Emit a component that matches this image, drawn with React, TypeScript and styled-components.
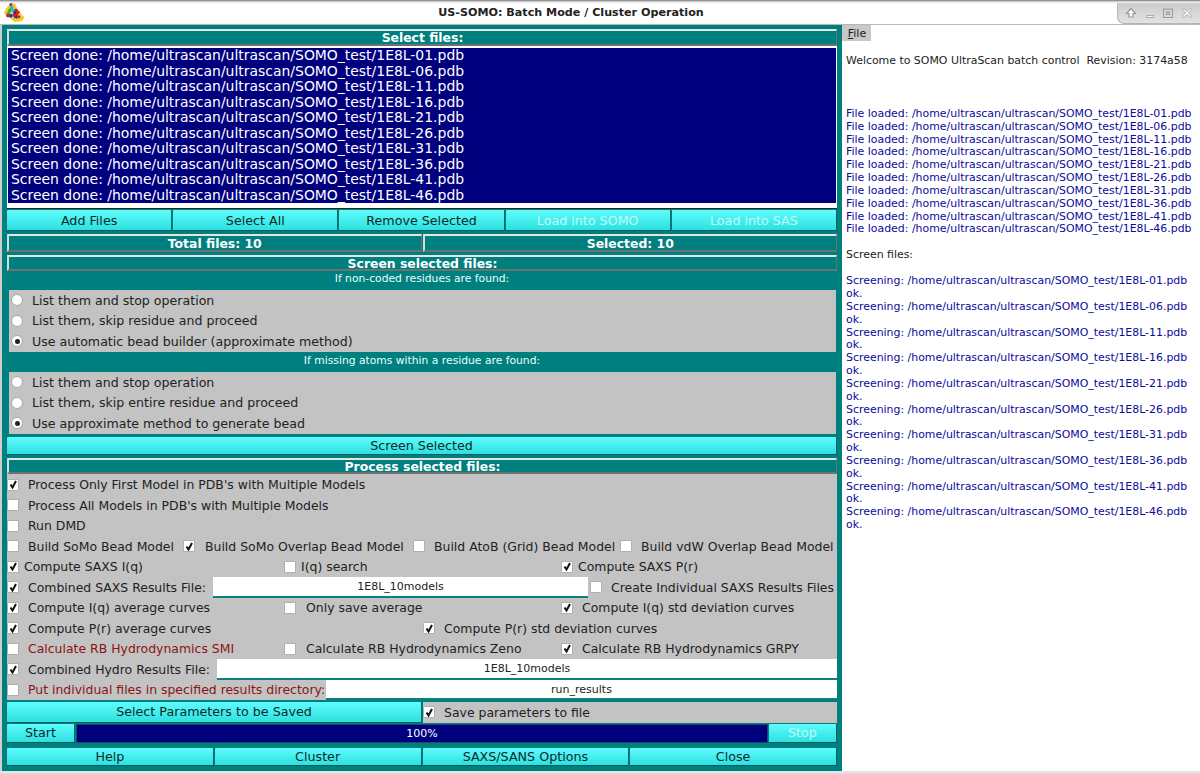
import React from 'react'
import styled, { createGlobalStyle } from 'styled-components'

const GlobalStyle = createGlobalStyle`
  html, body {
    margin: 0;
    padding: 0;
    width: 1200px;
    height: 774px;
    overflow: hidden;
    background: #ffffff;
    font-family: "DejaVu Sans", sans-serif;
  }
`

const Win = styled.div`
  width: 1200px;
  height: 774px;
  display: flex;
  flex-direction: column;
  background: #e8e8e8;
  overflow: hidden;
`
const TitleBar = styled.div`
  height: 25px;
  flex: none;
  display: flex;
  align-items: flex-start;
  justify-content: space-between;
  padding: 3px 0 0 4px;
  background: linear-gradient(#777 0, #e8e8e8 2px, #fff 4px);
  border-bottom: 1px solid #b8b8b8;
  position: relative;
  box-sizing: border-box;
`
const TitleText = styled.div`
  position: absolute;
  left: 0;
  top: 6px;
  width: 1142px;
  text-align: center;
  font-size: 11.15px;
  font-weight: bold;
  color: #222;
`
const WinButtons = styled.div`
  width: 83px;
  height: 21px;
  display: flex;
  align-items: center;
  justify-content: space-around;
  padding: 0 4px;
  box-sizing: border-box;
  background: linear-gradient(#cccccc, #e2e2e2);
  border-left: 1px solid #b5b5b5;
  border-bottom: 1px solid #b5b5b5;
  border-bottom-left-radius: 7px;
`
const Body = styled.div`
  height: 745.5px;
  flex: none;
  display: flex;
  min-height: 0;
`
const Footer = styled.div`
  flex: 1;
  background: linear-gradient(#e4e4e4 0, #e4e4e4 55%, #888 55%, #888 75%, #ddd 75%);
`
const LeftPanel = styled.div`
  width: 842px;
  flex: none;
  background: #007f7f;
  border-left: 2px solid #cfcfcf;
  box-sizing: border-box;
  padding: 4px 5px 0 5px;
  display: flex;
  flex-direction: column;
`
const RightPanel = styled.div`
  flex: 1;
  background: #fff;
  font-size: 10.93px;
  color: #111;
  position: relative;
`
const Label = styled.div<{ $h: number; $grow?: boolean }>`
  height: ${(p) => p.$h}px;
  flex: ${(p) => (p.$grow ? 1 : 'none')};
  display: flex;
  align-items: center;
  justify-content: center;
  box-sizing: border-box;
  background: #007f7f;
  color: #fff;
  font-size: 12.4px;
  font-weight: bold;
  border: 1px solid;
  border-top: 2px solid #e4e4e4;
  border-left: 2px solid #d8d8d8;
  border-right-color: #707070;
  border-bottom: 2px solid #707070;
`
const ListBox = styled.div`
  height: 163px;
  flex: none;
  box-sizing: border-box;
  background: #fff;
  padding: 2px 1px 5px 1px;
  border-bottom: 1px solid #222;
  margin-bottom: 1px;
`
const ListInner = styled.div`
  background: #00007f;
  height: 100%;
  padding-left: 3px;
  overflow: hidden;
`
const ListRow = styled.div`
  height: 15.5px;
  line-height: 15.5px;
  font-size: 13.95px;
  color: #fff;
  white-space: pre;
`
const ButtonRow = styled.div<{ $mb?: number; $mt?: number }>`
  display: flex;
  gap: 1px;
  flex: none;
  margin-top: ${(p) => p.$mt ?? 0}px;
  margin-bottom: ${(p) => p.$mb ?? 0}px;
`
const QtButton = styled.div<{ $h?: number; $off?: boolean; $w?: number }>`
  height: ${(p) => p.$h ?? 18}px;
  flex: ${(p) => (p.$w ? `0 0 ${p.$w}px` : 1)};
  display: flex;
  align-items: center;
  justify-content: center;
  box-sizing: border-box;
  background: linear-gradient(#5ffcfc, #2ee0e0);
  color: ${(p) => (p.$off ? '#bffcfc' : '#0b2b2b')};
  font-size: 12.7px;
  border-bottom: 1px solid #0a5a5a;
  border-right: 1px solid #0a6a6a;
  border-radius: 1px;
`
const Split = styled.div`
  display: flex;
  gap: 1px;
  flex: none;
  margin-bottom: 3px;
`
const SubNote = styled.div<{ $h: number; $pb: number }>`
  height: ${(p) => p.$h}px;
  padding-bottom: ${(p) => p.$pb}px;
  box-sizing: border-box;
  flex: none;
  display: flex;
  align-items: center;
  justify-content: center;
  color: #e8ffff;
  font-size: 10.75px;
`
const RadioGroup = styled.div`
  flex: none;
  background: #c3c3c3;
  margin: 0 1px 0 2px;
  display: flex;
  flex-direction: column;
  padding-left: 2px;
`
const RadioRow = styled.div`
  height: 20.5px;
  display: flex;
  align-items: center;
  gap: 9px;
  font-size: 12.6px;
  color: #222;
`
const RadioMark = styled.span<{ $on?: boolean }>`
  width: 12px;
  height: 12px;
  flex: none;
  border-radius: 50%;
  box-sizing: border-box;
  background: #fff;
  border: 1px solid #a8a8a8;
  display: flex;
  align-items: center;
  justify-content: center;
  &::after {
    content: '';
    display: ${(p) => (p.$on ? 'block' : 'none')};
    width: 5px;
    height: 5px;
    border-radius: 50%;
    background: #222;
  }
`
const Options = styled.div`
  background: #c3c3c3;
  flex: none;
  display: flex;
  flex-direction: column;
  padding-top: 0.5px;
  margin-bottom: 1.5px;
`
const OptionRow = styled.div<{ $cols: string; $gap?: number }>`
  height: 20.5px;
  display: grid;
  grid-template-columns: ${(p) => p.$cols};
  column-gap: ${(p) => p.$gap ?? 0}px;
  align-items: center;
`
const CheckWrap = styled.div<{ $gap?: number; $red?: boolean }>`
  display: flex;
  align-items: center;
  gap: ${(p) => p.$gap ?? 9}px;
  font-size: 12.45px;
  white-space: nowrap;
  color: ${(p) => (p.$red ? '#8c1414' : '#222')};
`
const Box = styled.span`
  width: 12px;
  height: 12px;
  flex: none;
  box-sizing: border-box;
  background: #fff;
  border: 1px solid #b0b0b0;
  border-radius: 1px;
  display: flex;
  align-items: center;
  justify-content: center;
`
const Field = styled.div`
  align-self: stretch;
  background: #fff;
  box-sizing: border-box;
  display: flex;
  align-items: center;
  justify-content: center;
  padding-top: 1px;
  font-size: 11px;
  color: #222;
  border-bottom: 2px solid #0a8080;
`
const SaveRow = styled.div`
  display: flex;
  gap: 1px;
  flex: none;
  margin-bottom: 1px;
`
const SavePane = styled.div`
  flex: 1;
  height: 21px;
  background: #c3c3c3;
  display: flex;
  align-items: center;
`
const Progress = styled.div`
  flex: 1;
  height: 19px;
  background: #00007f;
  color: #fff;
  font-size: 11px;
  display: flex;
  align-items: center;
  justify-content: center;
  border: 1px solid #1a4a6a;
  box-sizing: border-box;
`
const StartRow = styled.div`
  display: flex;
  gap: 1px;
  flex: none;
  margin-bottom: 5px;
`
const MenuTab = styled.div`
  width: 29px;
  height: 16px;
  padding-left: 1px;
  box-sizing: border-box;
  background: #c8c8c8;
  font-size: 11px;
  color: #222;
  display: flex;
  align-items: center;
  justify-content: center;
  span {
    text-decoration: underline;
  }
`
const Log = styled.div`
  padding: 14px 0 0 4px;
  display: flex;
  flex-direction: column;
`
const LogLine = styled.div<{ $blue?: boolean; $mt?: number }>`
  height: 12.85px;
  line-height: 12.85px;
  margin-top: ${(p) => p.$mt ?? 0}px;
  white-space: pre;
  color: ${(p) => (p.$blue ? '#0a0a9c' : '#222')};
`

const ids = ['01', '06', '11', '16', '21', '26', '31', '36', '41', '46']
const base = '/home/ultrascan/ultrascan/SOMO_test/1E8L-'

const Check = ({ on, children, gap, red }: { on?: boolean; children?: React.ReactNode; gap?: number; red?: boolean }) => (
  <CheckWrap $gap={gap} $red={red}>
    <Box>
      {on && (
        <svg width="9" height="9" viewBox="0 0 9 9">
          <path d="M1.5 4.5 L3.5 7.5 L7 1" fill="none" stroke="#111" strokeWidth="2" />
        </svg>
      )}
    </Box>
    {children}
  </CheckWrap>
)

const Radio = ({ on, children }: { on?: boolean; children: React.ReactNode }) => (
  <RadioRow>
    <RadioMark $on={on} />
    {children}
  </RadioRow>
)

const atoms: [number, number, string][] = [
  [7, 2, '#8a3a9a'], [10, 2.5, '#e8d020'], [5, 4.5, '#e8d020'], [8, 5, '#20b0d0'], [11, 5, '#e8d020'],
  [3, 7, '#e8d020'], [6, 7.5, '#30b040'], [9, 8, '#20c0d0'], [12, 7.5, '#d02020'], [2, 10, '#e8d020'],
  [5, 10, '#30b040'], [8, 10.5, '#e8d020'], [11, 10, '#2030c0'], [14, 9.5, '#d02020'], [4, 12.5, '#d02020'],
  [7, 13, '#2030c0'], [10, 13, '#d02020'], [13, 12.5, '#d02020'], [16, 12, '#e8d020'], [9, 15.5, '#e8d020'],
  [12, 15, '#2030c0'], [15, 14.5, '#d02020'], [18, 14.5, '#e8d020'], [11, 17, '#e8d020'], [14, 17, '#e8d020'], [17, 16.5, '#e8d020'],
]

const Logo = () => (
  <svg width="20" height="19" viewBox="0 0 20 19">
    {atoms.map(([cx, cy, fill]) => (
      <circle key={`${cx}-${cy}`} cx={cx} cy={cy} r="1.9" fill={fill} />
    ))}
  </svg>
)

const WinIcon = ({ children }: { children: React.ReactNode }) => (
  <svg width="12" height="12" viewBox="0 0 12 12" fill="none" stroke="#9a9a9a" strokeWidth="1.2">
    {children}
  </svg>
)

export default function App() {
  return (
    <>
      <GlobalStyle />
      <Win>
        <TitleBar>
          <Logo />
          <TitleText>US-SOMO: Batch Mode / Cluster Operation</TitleText>
          <WinButtons>
            <WinIcon>
              <path d="M6 1.5 L10.5 6.5 H8 V10 H4 V6.5 H1.5 Z" fill="#fff" />
            </WinIcon>
            <WinIcon>
              <path d="M2.5 8.5 H9.5 V10.5 H2.5 Z" fill="#f4f4f4" strokeWidth="0.8" />
            </WinIcon>
            <WinIcon>
              <path d="M1.5 2 H10.5 V10.5 H1.5 Z M4.5 5 H7.5 V7.5 H4.5 Z" strokeWidth="1.1" />
            </WinIcon>
            <WinIcon>
              <path d="M2 2 L10 10 M10 2 L2 10" stroke="#f4f4f4" strokeWidth="2.2" />
              <path d="M1.2 2.8 L2.8 1.2 L6 4.4 L9.2 1.2 L10.8 2.8 L7.6 6 L10.8 9.2 L9.2 10.8 L6 7.6 L2.8 10.8 L1.2 9.2 L4.4 6 Z" strokeWidth="0.8" />
            </WinIcon>
          </WinButtons>
        </TitleBar>
        <Body>
          <LeftPanel>
            <Label $h={17}>Select files:</Label>
            <ListBox>
              <ListInner>
                {ids.map((id) => (
                  <ListRow key={id}>{`Screen done: ${base}${id}.pdb`}</ListRow>
                ))}
              </ListInner>
            </ListBox>
            <ButtonRow $mb={3}>
              <QtButton $h={21}>Add Files</QtButton>
              <QtButton $h={21}>Select All</QtButton>
              <QtButton $h={21}>Remove Selected</QtButton>
              <QtButton $h={21} $off>
                Load into SOMO
              </QtButton>
              <QtButton $h={21} $off>
                Load into SAS
              </QtButton>
            </ButtonRow>
            <Split>
              <Label $h={18} $grow>
                Total files: 10
              </Label>
              <Label $h={18} $grow>
                Selected: 10
              </Label>
            </Split>
            <Label $h={16}>Screen selected files:</Label>
            <SubNote $h={19} $pb={4}>
              If non-coded residues are found:
            </SubNote>
            <RadioGroup>
              <Radio>List them and stop operation</Radio>
              <Radio>List them, skip residue and proceed</Radio>
              <Radio on>Use automatic bead builder (approximate method)</Radio>
            </RadioGroup>
            <SubNote $h={20.5} $pb={3}>
              If missing atoms within a residue are found:
            </SubNote>
            <RadioGroup>
              <Radio>List them and stop operation</Radio>
              <Radio>List them, skip entire residue and proceed</Radio>
              <Radio on>Use approximate method to generate bead</Radio>
            </RadioGroup>
            <ButtonRow $mt={3.5} $mb={3}>
              <QtButton>Screen Selected</QtButton>
            </ButtonRow>
            <Label $h={16}>Process selected files:</Label>
            <Options>
              <OptionRow $cols="1fr">
                <Check on>Process Only First Model in PDB's with Multiple Models</Check>
              </OptionRow>
              <OptionRow $cols="1fr">
                <Check>Process All Models in PDB's with Multiple Models</Check>
              </OptionRow>
              <OptionRow $cols="1fr">
                <Check>Run DMD</Check>
              </OptionRow>
              <OptionRow $cols="176px 230px 207px 1fr">
                <Check>Build SoMo Bead Model</Check>
                <Check on gap={10}>
                  Build SoMo Overlap Bead Model
                </Check>
                <Check>Build AtoB (Grid) Bead Model</Check>
                <Check>Build vdW Overlap Bead Model</Check>
              </OptionRow>
              <OptionRow $cols="277px 277px 1fr">
                <Check on gap={5}>
                  Compute SAXS I(q)
                </Check>
                <Check gap={5}>I(q) search</Check>
                <Check on gap={5}>
                  Compute SAXS P(r)
                </Check>
              </OptionRow>
              <OptionRow $cols="204px 375px 1fr" $gap={2}>
                <Check on>Combined SAXS Results File:</Check>
                <Field>1E8L_10models</Field>
                <Check>Create Individual SAXS Results Files</Check>
              </OptionRow>
              <OptionRow $cols="277px 277px 1fr">
                <Check on>Compute I(q) average curves</Check>
                <Check gap={10}>Only save average</Check>
                <Check on>Compute I(q) std deviation curves</Check>
              </OptionRow>
              <OptionRow $cols="416px 1fr">
                <Check on>Compute P(r) average curves</Check>
                <Check on>Compute P(r) std deviation curves</Check>
              </OptionRow>
              <OptionRow $cols="277px 277px 1fr">
                <Check red>Calculate RB Hydrodynamics SMI</Check>
                <Check gap={10}>Calculate RB Hydrodynamics Zeno</Check>
                <Check on>Calculate RB Hydrodynamics GRPY</Check>
              </OptionRow>
              <OptionRow $cols="210px 1fr">
                <Check on>Combined Hydro Results File:</Check>
                <Field>1E8L_10models</Field>
              </OptionRow>
              <OptionRow $cols="319px 1fr">
                <Check red>Put individual files in specified results directory:</Check>
                <Field>run_results</Field>
              </OptionRow>
            </Options>
            <SaveRow>
              <QtButton $h={21}>Select Parameters to be Saved</QtButton>
              <SavePane>
                <Check on>Save parameters to file</Check>
              </SavePane>
            </SaveRow>
            <StartRow>
              <QtButton $h={19} $w={68}>
                Start
              </QtButton>
              <Progress>100%</Progress>
              <QtButton $h={19} $w={68} $off>
                Stop
              </QtButton>
            </StartRow>
            <ButtonRow>
              <QtButton>Help</QtButton>
              <QtButton>Cluster</QtButton>
              <QtButton>SAXS/SANS Options</QtButton>
              <QtButton>Close</QtButton>
            </ButtonRow>
          </LeftPanel>
          <RightPanel>
            <MenuTab>
              <div>
                <span>F</span>ile
              </div>
            </MenuTab>
            <Log>
              <LogLine>Welcome to SOMO UltraScan batch control  Revision: 3174a58</LogLine>
              {ids.map((id, i) => (
                <LogLine key={id} $blue $mt={i === 0 ? 40 : 0}>{`File loaded: ${base}${id}.pdb`}</LogLine>
              ))}
              <LogLine $mt={13}>Screen files:</LogLine>
              {ids.map((id, i) => (
                <React.Fragment key={id}>
                  <LogLine $blue $mt={i === 0 ? 13 : 0}>{`Screening: ${base}${id}.pdb`}</LogLine>
                  <LogLine $blue>ok.</LogLine>
                </React.Fragment>
              ))}
            </Log>
          </RightPanel>
        </Body>
        <Footer />
      </Win>
    </>
  )
}
